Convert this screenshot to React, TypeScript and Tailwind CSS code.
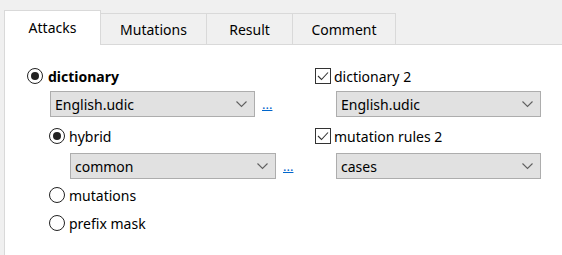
import React from "react";

const font = { fontFamily: '"Noto Sans", "Open Sans", sans-serif' };

function Radio({ checked }: { checked?: boolean }) {
  return (
    <span className="flex h-[16px] w-[16px] shrink-0 items-center justify-center rounded-full border border-[#222222] bg-white">
      {checked && <span className="h-[8px] w-[8px] rounded-full bg-[#222222]" />}
    </span>
  );
}

function Check() {
  return (
    <span className="flex h-[16px] w-[16px] shrink-0 items-center justify-center border border-[#333333] bg-white">
      <svg width="12" height="10" viewBox="0 0 12 10">
        <polyline points="1,5 4.5,8.5 11,1.5" fill="none" stroke="#333333" strokeWidth="1.1" />
      </svg>
    </span>
  );
}

function Chevron() {
  return (
    <svg width="11" height="7" viewBox="0 0 11 7">
      <polyline points="0.5,0.5 5.5,5.5 10.5,0.5" fill="none" stroke="#606060" strokeWidth="1.1" />
    </svg>
  );
}

function Select({ value, w }: { value: string; w: string }) {
  return (
    <div className={`flex h-[26px] ${w} items-center justify-between border border-[#adadad] bg-[#e1e1e1] pl-[4px] pr-[7px] text-[14px] text-black`}>
      <span>{value}</span>
      <Chevron />
    </div>
  );
}

function Dots() {
  return <span className="ml-[7px] text-[13px] leading-none text-[#0066cc] underline">...</span>;
}

export default function App() {
  return (
    <div className="flex h-[255px] w-[562px] flex-col overflow-hidden bg-[#f0f0f0] pl-[4px] pt-[9px]" style={font}>
      <div className="flex h-[35px] items-end text-[14px] text-black">
        <div className="relative z-10 -mb-px flex h-[35px] w-[97px] items-center justify-center border-x border-t border-[#d9d9d9] bg-white pb-[2px]">
          Attacks
        </div>
        <div className="flex h-[31px] w-[106px] items-center justify-center border-r border-t border-[#d9d9d9]">Mutations</div>
        <div className="flex h-[31px] w-[86px] items-center justify-center border-r border-t border-[#d9d9d9]">Result</div>
        <div className="flex h-[31px] w-[103px] items-center justify-center border-r border-t border-[#d9d9d9]">Comment</div>
      </div>
      <div className="flex flex-1 border-l border-t border-[#d9d9d9] bg-white pl-[22px] pt-[23px] text-[14px] text-black">
        <div className="flex w-[288px] flex-col">
          <div className="flex h-[16px] items-center">
            <Radio checked />
            <span className="ml-[5px] font-bold">dictionary</span>
          </div>
          <div className="ml-[23px] mt-[7px] flex items-center">
            <Select value="English.udic" w="w-[205px]" />
            <Dots />
          </div>
          <div className="ml-[22px] mt-[11px] flex h-[16px] items-center">
            <Radio checked />
            <span className="ml-[4px]">hybrid</span>
          </div>
          <div className="ml-[43px] mt-[9px] flex items-center">
            <Select value="common" w="w-[206px]" />
            <Dots />
          </div>
          <div className="ml-[22px] mt-[8px] flex h-[16px] items-center">
            <Radio />
            <span className="ml-[4px]">mutations</span>
          </div>
          <div className="ml-[22px] mt-[12px] flex h-[16px] items-center">
            <Radio />
            <span className="ml-[4px]">prefix mask</span>
          </div>
        </div>
        <div className="flex flex-col">
          <div className="flex h-[16px] items-center">
            <Check />
            <span className="ml-[3px]">dictionary 2</span>
          </div>
          <div className="ml-[21px] mt-[7px]">
            <Select value="English.udic" w="w-[205px]" />
          </div>
          <div className="mt-[11px] flex h-[16px] items-center">
            <Check />
            <span className="ml-[3px]">mutation rules 2</span>
          </div>
          <div className="ml-[21px] mt-[9px]">
            <Select value="cases" w="w-[205px]" />
          </div>
        </div>
      </div>
    </div>
  );
}
